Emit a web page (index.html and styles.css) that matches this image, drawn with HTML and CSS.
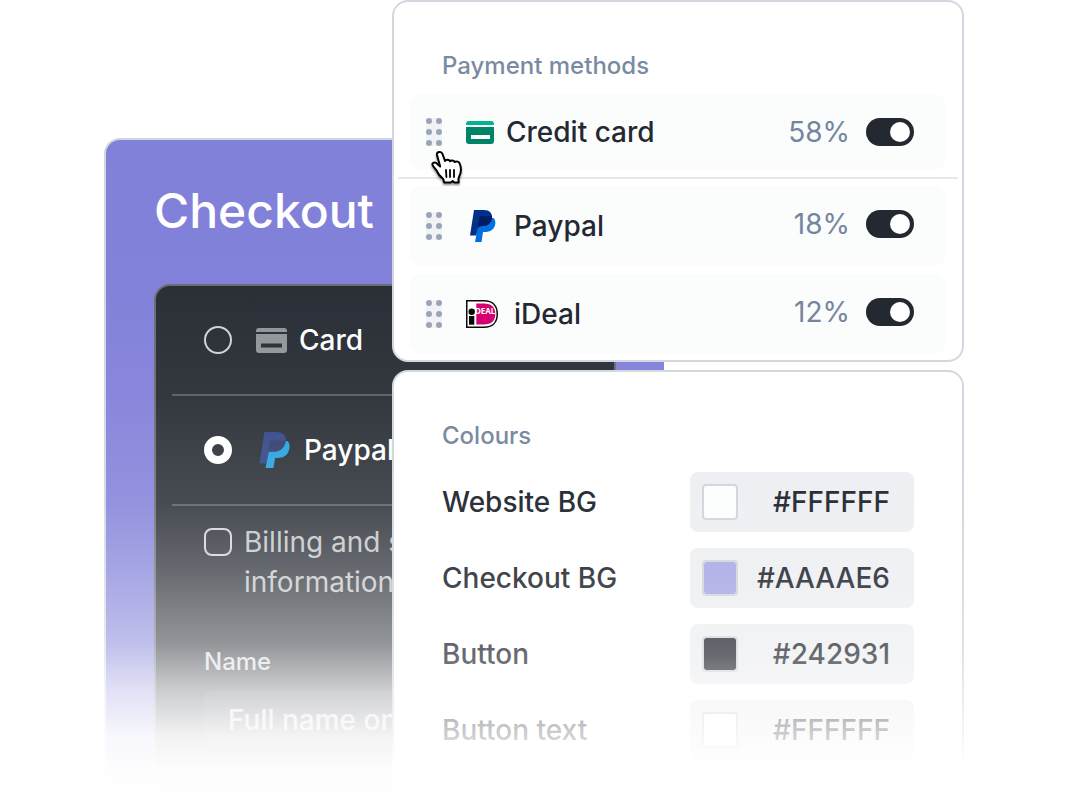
FILE: index.html
```html
<!DOCTYPE html>
<html lang="en">
<head>
  <meta charset="UTF-8">
  <title>Checkout editor</title>
  <meta name="viewport" content="width=device-width, initial-scale=1">
  <link rel="stylesheet" href="styles.css">
</head>
<body>
  <!-- Shared icons -->
  <svg class="sprite" aria-hidden="true">
    <symbol id="dots" viewBox="0 0 16 28">
      <rect width="16" height="28" rx="3" fill="#f1f2f5"/>
      <circle cx="3" cy="3" r="3"/><circle cx="13" cy="3" r="3"/>
      <circle cx="3" cy="14" r="3"/><circle cx="13" cy="14" r="3"/>
      <circle cx="3" cy="25" r="3"/><circle cx="13" cy="25" r="3"/>
    </symbol>
  </svg>

  <main class="stage">
    <section class="checkout">
      <h1>Checkout</h1>
      <form class="pay-card">
        <div class="option">
          <input class="radio" type="radio" name="pay" id="pay-card">
          <label for="pay-card">
            <svg width="31" height="25" viewBox="0 0 31 25" fill="#8f9297">
              <path d="M3 0h25a3 3 0 0 1 3 3v1H0V3a3 3 0 0 1 3-3z"/>
              <path fill-rule="evenodd" d="M0 6h31v16a3 3 0 0 1-3 3H3a3 3 0 0 1-3-3zM5 15.500v4h21v-4z"/>
            </svg>
            Card
          </label>
        </div>
        <div class="option">
          <input class="radio" type="radio" name="pay" id="pay-paypal" checked>
          <label for="pay-paypal">
            <svg width="36" height="36" viewBox="-3 0 32 32">
              <path fill="#1f9fdc" d="M9.500 8H25c2 2 2.300 4.500 1.500 7.500-1.500 5.500-5.500 7.500-10 7.500H14l-1.500 9H5.500z"/>
              <path fill="#2c4085" d="M4.500 0H15c6 0 9 3.500 8.300 8-.8 6-5 9-10 9H8.500L6.200 28H0z"/>
              <path fill="#2a3668" d="M9.600 7.500h13.800V8c-.8 6-5 9.500-10 9.500H8z"/>
            </svg>
            Paypal
          </label>
        </div>
        <div class="billing">
          <input class="tick" type="checkbox" id="billing">
          <label for="billing">Billing and shipping information</label>
        </div>
        <div class="name-field">
          <label for="name">Name</label>
          <input type="text" id="name" placeholder="Full name on card">
        </div>
      </form>
    </section>

    <div class="panels">
      <section class="panel methods">
        <h2>Payment methods</h2>
        <div class="method method-first">
          <button class="handle" type="button" aria-label="Move credit card"><svg width="16" height="28"><use href="#dots"/></svg></button>
          <label for="on-card">
            <svg width="28" height="23" viewBox="0 0 28 23">
              <path fill="#00b493" d="M3 0h22a3 3 0 0 1 3 3v1H0V3a3 3 0 0 1 3-3z"/>
              <path fill="#008468" fill-rule="evenodd" d="M0 6h28v14a3 3 0 0 1-3 3H3a3 3 0 0 1-3-3zM5 14v4h19v-4z"/>
            </svg>
            Credit card
          </label>
          <div class="status">
            <span>58%</span>
            <input class="toggle" type="checkbox" id="on-card" checked>
          </div>
          <!-- Hand pointer over the drag handle -->
          <svg class="pointer" width="34" height="38" viewBox="0 0 34 38">
            <path fill="#fff" stroke="#000" stroke-width="2" stroke-linejoin="round" d="M7 5C6.500 1.500 11.500 1 12.500 4l2.500 7c1-1.700 4.200-1.500 5 .3 1.200-1.300 4-1 4.700.7 1.700-1.200 4.500-.3 5 1.500 1.700 4.500 1.700 9-.5 13l-.8 2.500.3 3.500h-4.500l-1.500-1.500-2 1.500h-6.500l-1-3.500c-3-2.300-5.500-5.500-7-9-1.300-2-3.500-3.500-3.800-5.300-.3-2 2-2.700 3.800-1.700l4 3.500z"/>
            <path stroke="#000" stroke-width="1.800" stroke-linecap="round" d="M16 20l.4 7M20 20v7M24 20v7"/>
          </svg>
        </div>
        <hr>
        <div class="method">
          <button class="handle" type="button" aria-label="Move Paypal"><svg width="16" height="28"><use href="#dots"/></svg></button>
          <label for="on-paypal">
            <svg width="36" height="32" viewBox="-4 0 36 32">
              <path fill="#0070e0" d="M9.500 8H23.500c2 2 2.300 4.500 1.500 7.500-1.500 4.500-5.500 6.500-10 6.500h-2l-1.500 10H5z"/>
              <path fill="#003087" d="M4 0h10c5.500 0 8.500 3.500 8 8-.8 5-4.500 8-9 8H8.500L6.200 25.500H0z"/>
              <path fill="#001c64" d="M9.500 6h12.300c.3.600.3 1.300.2 2-.8 5-4.500 8-9 8-2.500 0-4.500.8-5.300 2.500z"/>
            </svg>
            Paypal
          </label>
          <div class="status">
            <span>18%</span>
            <input class="toggle" type="checkbox" id="on-paypal" checked>
          </div>
        </div>
        <div class="method">
          <button class="handle" type="button" aria-label="Move iDeal"><svg width="16" height="28"><use href="#dots"/></svg></button>
          <label for="on-ideal">
            <svg width="36" height="28" viewBox="0 0 36 28" aria-hidden="true">
              <path fill="#fff" stroke="#0a0b09" stroke-width="1.500" d="M.75.75H18c8.500 0 13.250 5 13.250 13.250S26.500 27.250 18 27.250H.75z"/>
              <path fill="#d50172" d="M10.300 3.500H18c7.500 0 11.300 4 11.300 10.500s-3.800 10.500-11.300 10.500h-7.700z"/>
              <circle cx="5.700" cy="11.700" r="3.200" fill="#0a0b09"/>
              <path fill="#0a0b09" d="M3 16h5.300v8.700H3z"/>
              <text class="ideal-text" x="9" y="14">DEAL</text>
            </svg>
            iDeal
          </label>
          <div class="status">
            <span>12%</span>
            <input class="toggle" type="checkbox" id="on-ideal" checked>
          </div>
        </div>
      </section>

      <section class="panel colours">
        <h2>Colours</h2>
        <div class="colour">
          <label for="c-site">Website BG</label>
          <div class="value">
            <input type="color" value="#fcfdfd" aria-label="Website BG swatch">
            <input type="text" id="c-site" value="#FFFFFF">
          </div>
        </div>
        <div class="colour">
          <label for="c-checkout">Checkout BG</label>
          <div class="value">
            <input type="color" value="#aaaae6" aria-label="Checkout BG swatch">
            <input type="text" id="c-checkout" value="#AAAAE6">
          </div>
        </div>
        <div class="colour">
          <label for="c-button">Button</label>
          <div class="value">
            <input type="color" value="#242931" aria-label="Button swatch">
            <input type="text" id="c-button" value="#242931">
          </div>
        </div>
        <div class="colour">
          <label for="c-text">Button text</label>
          <div class="value">
            <input type="color" value="#ffffff" aria-label="Button text swatch">
            <input type="text" id="c-text" value="#FFFFFF">
          </div>
        </div>
      </section>
    </div>
  </main>
</body>
</html>
```
FILE: styles.css
```css
* {
  box-sizing: border-box;
}
body {
  margin: 0;
  background: #fff;
  color: #242931;
  font-family: Inter, "Liberation Sans", sans-serif;
  font-size: 28px;
  font-weight: 500;
  line-height: 40px;
}
h1, h2 {
  margin: 0;
  font-weight: 500;
}
input, button {
  margin: 0;
  font: inherit;
  color: inherit;
}
svg {
  flex: none;
}
.sprite {
  display: none;
}

/* the checkout and the panels share the middle column */
.stage {
  display: grid;
  grid-template-columns: 288fr 272fr 300fr;
  min-height: 100vh;
  padding: 0 104px;
}

/* Checkout preview */
.checkout {
  grid-area: 1 / 1 / 2 / 3;
  position: relative;
  display: flex;
  flex-direction: column;
  margin-top: 138px;
  padding: 47px 48px 0;
  background: #7f7ed9;
  border: 2px solid #d0d5de;
  border-width: 2px 0 0 2px;
  border-radius: 16px 0 0 0;
  color: #fff;
}
.checkout h1 {
  margin-bottom: 49px;
  font-size: 48px;
  line-height: 48px;
}
.pay-card {
  flex: 1;
  padding: 0 16px;
  background: #242931;
  border: 2px solid #66696e;
  border-bottom: 0;
  border-radius: 16px 16px 0 0;
}
.option {
  display: flex;
  align-items: center;
  gap: 24px;
  height: 110px;
  padding: 0 32px;
  border-bottom: 2px solid #54575d;
}
.option label {
  display: flex;
  align-items: center;
  gap: 12px;
}
.radio, .tick {
  appearance: none;
  flex: none;
  width: 28px;
  height: 28px;
  border: 2px solid #d0d1d3;
  border-radius: 50%;
}
.radio:checked {
  border: 8px solid #fff;
}
.tick {
  margin-top: 6px;
  border-radius: 8px;
}
.billing {
  display: flex;
  gap: 12px;
  padding: 16px 32px 44px;
  color: #c0c2c4;
  font-weight: 400;
}
.name-field {
  display: flex;
  flex-direction: column;
  gap: 12px;
  padding: 0 32px;
}
.name-field label {
  font-size: 24px;
  line-height: 32px;
  color: #d4d5d7;
}
.name-field input {
  width: 100%;
  height: 60px;
  padding: 0 24px;
  background: #343840;
  border: 0;
  border-radius: 8px;
}
.name-field input::placeholder {
  color: #c8c8ea;
  opacity: 1;
}

/* Both previews fade out towards the bottom of the page */
.checkout::after, .colours::after {
  content: "";
  position: absolute;
  inset: -2px;
  pointer-events: none;
}
.checkout::after {
  background: linear-gradient(
    rgba(255, 255, 255, 0.02) 0%,
    rgba(255, 255, 255, 0.03) 23%,
    rgba(255, 255, 255, 0.07) 39%,
    rgba(255, 255, 255, 0.16) 55%,
    rgba(255, 255, 255, 0.3) 65%,
    rgba(255, 255, 255, 0.5) 76%,
    rgba(255, 255, 255, 0.76) 83%,
    rgba(255, 255, 255, 0.94) 90%,
    rgba(255, 255, 255, 0.99) 95%,
    #fff 100%
  );
}
.colours::after {
  background: linear-gradient(
    rgba(255, 255, 255, 0) 20%,
    rgba(255, 255, 255, 0.04) 31%,
    rgba(255, 255, 255, 0.13) 48%,
    rgba(255, 255, 255, 0.3) 66%,
    rgba(255, 255, 255, 0.45) 73%,
    rgba(255, 255, 255, 0.68) 81%,
    rgba(255, 255, 255, 0.8) 86%,
    rgba(255, 255, 255, 0.97) 91%,
    #fff 98%
  );
}

/* Settings panels */
.panels {
  grid-area: 1 / 2 / 2 / 4;
  z-index: 1;
  display: flex;
  flex-direction: column;
  gap: 8px;
}
.panel {
  position: relative;
  background: #fff;
  border: 2px solid #d3d7df;
  border-radius: 16px;
}
.panel h2 {
  font-size: 24px;
  line-height: 32px;
  color: #7a8ba1;
}
.methods {
  padding: 48px 4px 6px;
}
.methods h2 {
  margin: 0 44px 12px;
}
.methods hr {
  height: 2px;
  margin: 7px 0;
  background: #e6e7ea;
  border: 0;
}
.method {
  position: relative;
  display: flex;
  align-items: center;
  gap: 24px;
  height: 80px;
  margin: 0 12px;
  padding: 0 32px 0 16px;
  background: #fbfcfc;
  border-radius: 12px;
}
.method-first {
  height: 76px;
}
.method + .method {
  margin-top: 8px;
}
.method label {
  display: flex;
  align-items: center;
  gap: 12px;
}
.handle {
  display: flex;
  padding: 0;
  background: none;
  border: 0;
  fill: #9aa6b8;
  cursor: pointer;
}
.ideal-text {
  fill: #fff;
  font: bold 8px "Noto Sans", sans-serif;
}
.status {
  display: flex;
  align-items: center;
  align-self: flex-start;
  gap: 16px;
  height: 76px;
  margin-left: auto;
  color: #74869d;
  font-weight: 400;
}
.toggle {
  appearance: none;
  display: flex;
  width: 48px;
  height: 28px;
  padding: 4px;
  background: #98a2b0;
  border-radius: 14px;
}
.toggle::before {
  content: "";
  width: 20px;
  height: 20px;
  background: #fff;
  border-radius: 50%;
}
.toggle:checked {
  justify-content: flex-end;
  background: #242931;
}
.pointer {
  position: absolute;
  left: 20px;
  top: 56px;
  filter: drop-shadow(0 2px 1px rgba(0, 0, 0, 0.4));
  pointer-events: none;
}

.colours {
  flex: 1;
  padding: 48px 48px 0;
}
.colours h2 {
  margin-bottom: 20px;
}
.colour {
  display: flex;
  align-items: center;
  justify-content: space-between;
  margin-bottom: 16px;
}
.value {
  display: flex;
  align-items: center;
  width: 224px;
  height: 60px;
  padding: 0 24px 0 12px;
  background: #eeeff2;
  border-radius: 8px;
}
.value input[type="color"] {
  appearance: none;
  flex: none;
  width: 36px;
  height: 36px;
  padding: 0;
  background: none;
  border: 2px solid #d0d6de;
  border-radius: 4px;
}
.value input[type="color"]::-webkit-color-swatch-wrapper {
  padding: 0;
}
.value input[type="color"]::-webkit-color-swatch {
  border: 0;
  border-radius: 2px;
}
.value input[type="text"] {
  flex: 1;
  min-width: 0;
  padding: 0;
  background: none;
  border: 0;
  text-align: right;
}
```
